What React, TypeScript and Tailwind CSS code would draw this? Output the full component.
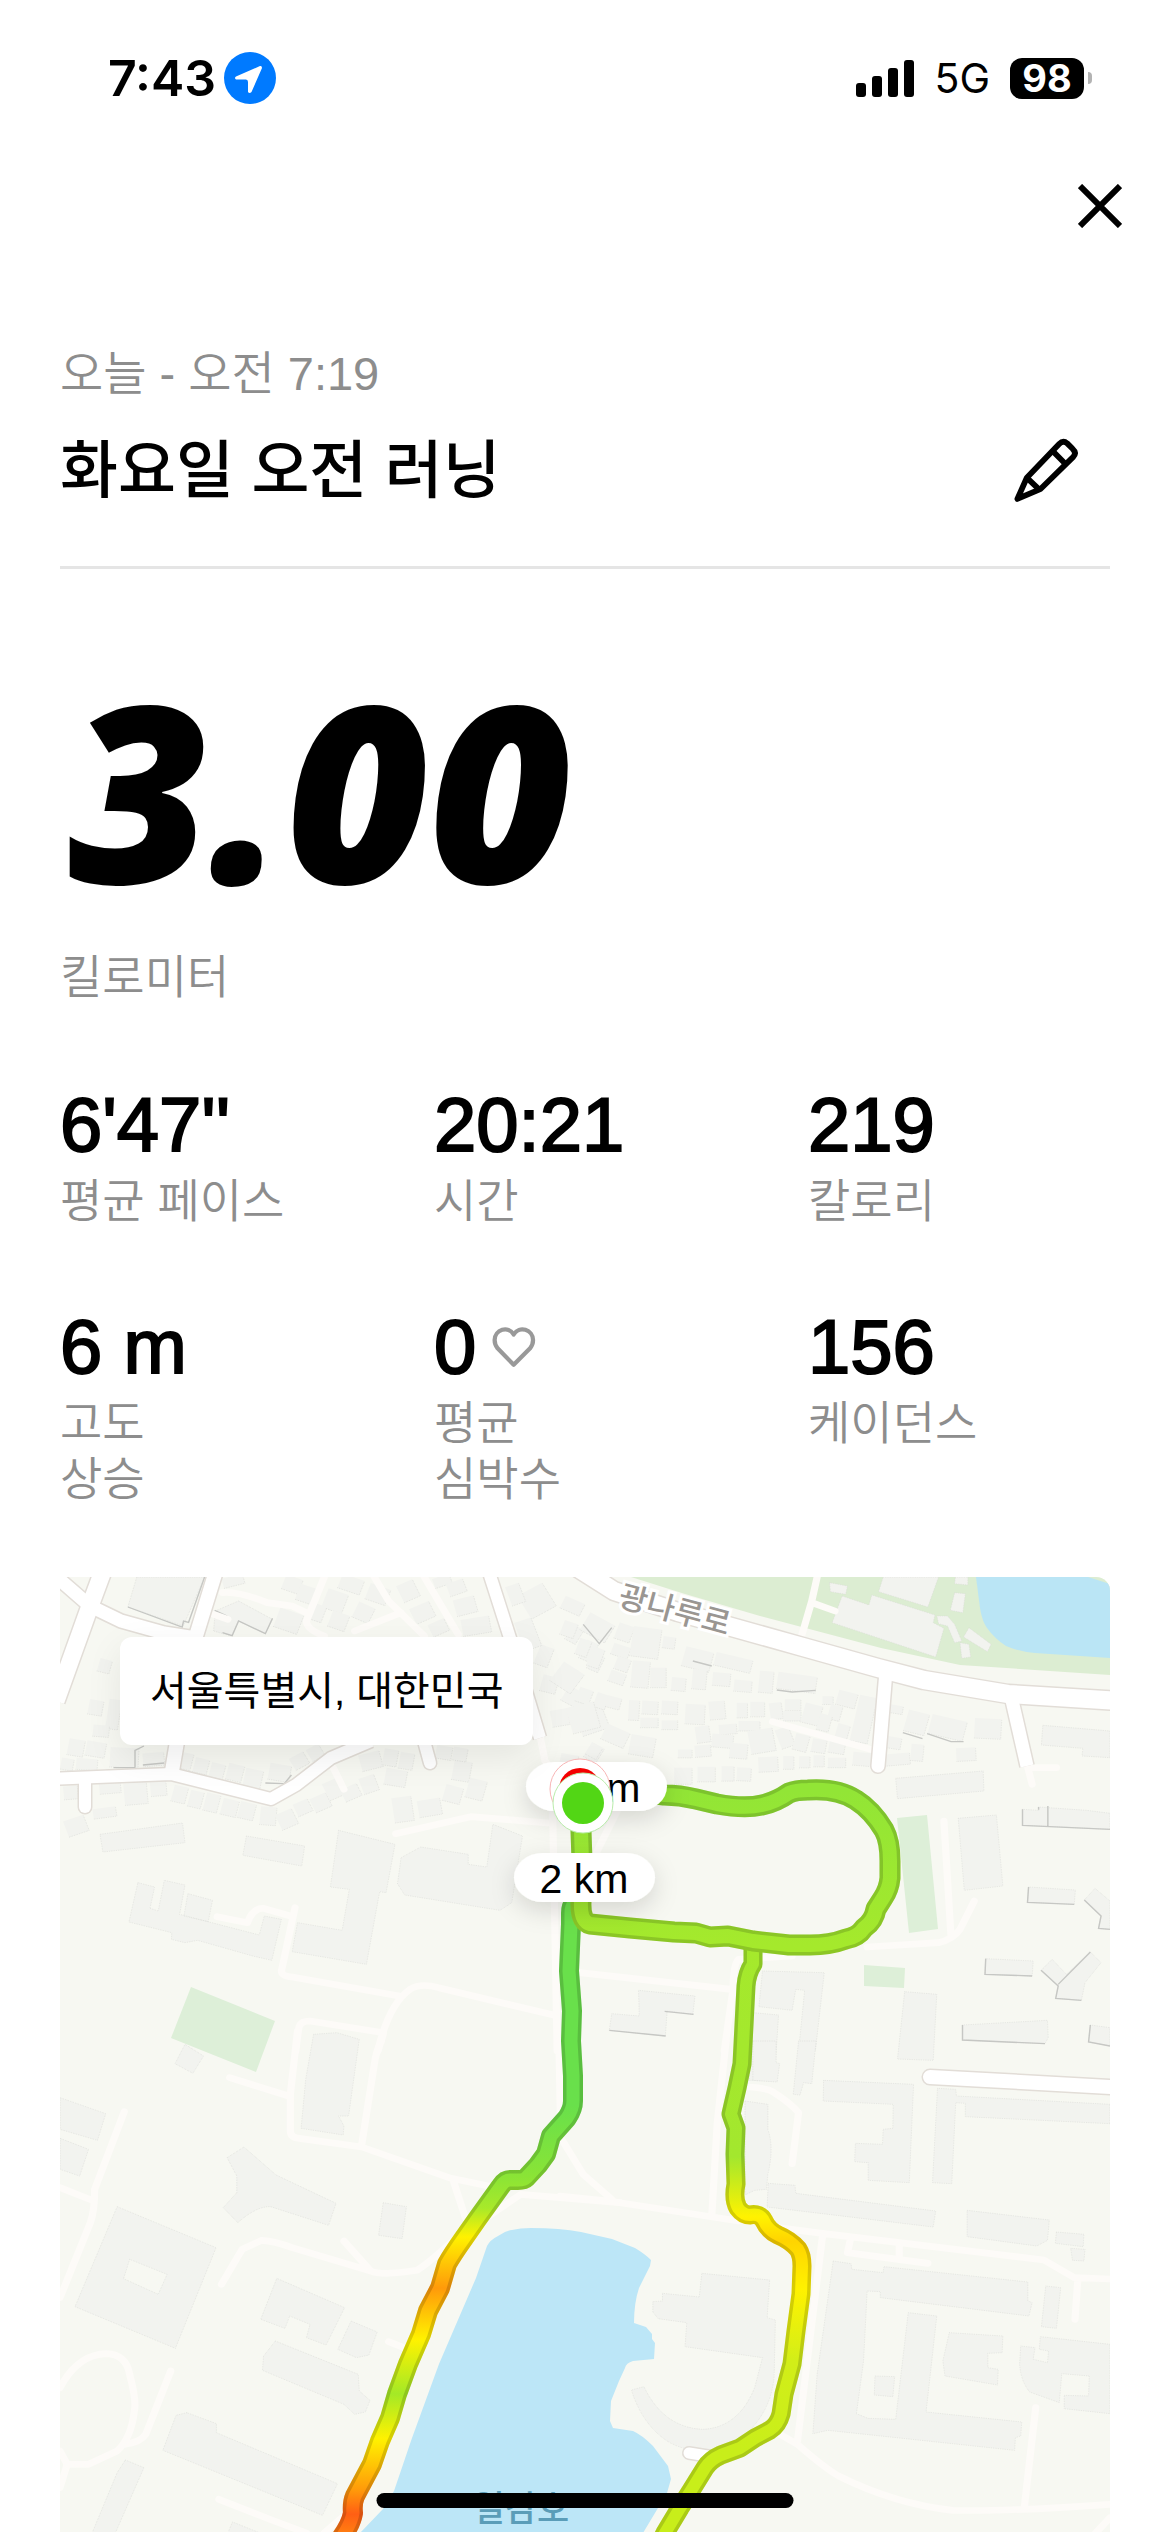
import React from "react";
import clsx from "clsx";

const latin = "font-['Liberation_Sans','Noto_Sans_CJK_KR',sans-serif]";

const stats = [
  { value: "6'47''", label: ["평균 페이스"] },
  { value: "20:21", label: ["시간"] },
  { value: "219", label: ["칼로리"] },
  { value: "6 m", label: ["고도", "상승"] },
  { value: "0", label: ["평균", "심박수"], heart: true },
  { value: "156", label: ["케이던스"] },
];

type House = [number, number, number, number, number];

type TileData = {
  transform: string;
  buildings: string;
  shades?: string;
  lanes: string;
  houses: House[];
};

// The ground layer is cut in four tiles, each with its own local units
const tiles: TileData[] = [
  {
    transform: "translate(60 1570) scale(0.35714 0.33333)",
    buildings:
      "M215 18H405L345 165 190 108Z M435 120 500 90 595 145 575 188 500 150 480 195 430 180Z M780 778 938 820 913 965 895 962 858 1180 650 1142 665 1055 790 1078 810 955 757 948Z M945 938 955 860 1010 828 1143 850V880L1195 888 1212 760 1295 795 1265 995 1232 1018 965 972Z M112 790 343 756 350 815 120 843Z M522 795 685 825 677 885 512 853Z M218 935 265 948 252 1012 275 1020 292 928 350 942 335 1030 558 1092 572 1035 620 1045 593 1168 540 1155 385 1108 350 1115 312 1105 313 1085 193 1053Z M358 968 427 988 415 1052 347 1035Z",
    shades:
      "M190 108 342 168 346 150 360 154 405 18 M433 118 468 135 M455 185 482 194 500 150 575 188 595 142 M210 590V538L235 525 M150 590H210 M232 582 292 576 M575 636 628 638 648 612",
    lanes:
      "M455 65Q500 60 580 95L650 105 690 125 M740 18 690 150Q690 175 740 195 M880 18 920 90 1020 195 M825 180 955 125 M1020 18 1115 190 M430 130 470 145 M940 788 1150 737 1380 757 M1380 750 1392 1440 M1345 500 1358 570 1380 600V750 M765 590 795 655 M440 1037 525 1055Q540 1010 570 1012L645 1035 M658 1010 620 1200Q620 1215 650 1218L950 1275 M890 1440Q920 1300 980 1255Q1010 1235 1060 1250L1385 1333 M905 1385 700 1350Q670 1350 668 1375L660 1440",
    houses: [
      [485, 30, 60, 30, -15], [650, 40, 50, 45, 20], [690, 70, 50, 50, 20], [815, 40, 65, 45, 20], [770, 90, 60, 60, 20],
      [720, 125, 40, 50, 20], [780, 150, 50, 50, 20], [640, 150, 70, 60, 20], [890, 70, 60, 50, 20], [850, 125, 50, 50, 25],
      [975, 60, 50, 55, -25], [1015, 125, 60, 50, -25], [1070, 30, 50, 30, -20], [1110, 50, 50, 40, -20], [1135, 105, 60, 50, -15],
      [1165, 165, 80, 50, -10], [1060, 170, 50, 40, -25], [1335, 90, 80, 80, -30], [1275, 70, 40, 60, -20], [1440, 190, 35, 50, 30],
      [1480, 240, 35, 60, 25], [1355, 255, 40, 60, 20], [1310, 190, 50, 90, -20], [1420, 310, 50, 50, 30], [1370, 340, 45, 50, 15],
      [1500, 275, 35, 50, 25], [1400, 440, 50, 50, -10], [1440, 380, 60, 50, 30], [1490, 450, 80, 70, -20], [1495, 545, 40, 50, 30],
      [1425, 570, 50, 40, 10], [125, 285, 35, 40, 15], [100, 410, 40, 45, 10], [150, 430, 35, 90, 8], [115, 480, 45, 35, 5],
      [45, 530, 45, 50, 10], [100, 535, 55, 45, 10], [20, 580, 35, 35, 10], [75, 580, 60, 35, 5], [180, 560, 80, 60, 3],
      [262, 565, 60, 40, -5], [335, 670, 40, 50, 14], [380, 685, 38, 50, 14], [425, 695, 40, 55, 14], [475, 710, 45, 50, 14],
      [523, 720, 45, 50, 14], [583, 735, 45, 55, 5], [635, 745, 50, 50, -25], [680, 710, 45, 40, -25], [730, 695, 50, 45, -25],
      [765, 655, 45, 55, -25], [815, 665, 50, 40, -25], [865, 640, 45, 50, -20], [940, 620, 60, 50, 10], [960, 715, 55, 75, -8],
      [1035, 710, 65, 50, -10], [1125, 600, 50, 60, 10], [1165, 655, 50, 60, 15], [1100, 670, 50, 50, 15], [350, 570, 40, 50, 14],
      [395, 585, 40, 45, 14], [440, 600, 40, 45, 14], [490, 605, 45, 50, 14], [540, 625, 50, 60, 12], [615, 605, 60, 50, 10],
      [670, 570, 45, 40, -30], [715, 545, 40, 40, -30], [870, 570, 60, 50, -15], [925, 560, 40, 50, 10], [970, 570, 40, 50, 10],
      [1075, 545, 45, 40, 10], [1120, 550, 40, 40, 10], [140, 650, 60, 35, -5], [212, 668, 65, 65, -5], [275, 645, 45, 60, -5],
      [30, 665, 40, 40, -5], [125, 725, 65, 30, -8], [45, 765, 60, 50, -20],
    ],
  },
  {
    transform: "translate(560 1570) scale(0.35714 0.33333)",
    buildings:
      "M905 18H1060L1030 108 892 62Z M790 75 865 102 873 72 1050 132 1045 155 1075 172 1052 258 762 155Z M1055 135 1085 135 1105 160 1125 210 1105 215 1085 165 1060 158Z M1145 170 1207 220 1197 242 1130 198Z M1120 215 1145 220 1150 258 1125 262Z M1105 65 1135 68 1128 125 1093 118Z M755 35 805 45 800 70 757 62Z M1107 18H1142V42L1105 38Z M1352 463 1540 480V560L1462 555 1464 532 1348 522Z M940 622 1185 600 1187 660 945 683Z M1115 742 1222 732 1240 945 1132 958Z M1295 715 1340 718V708L1475 718 1540 727V775L1295 763Z M1312 948 1443 957 1440 1000 1309 994Z M1468 987 1498 952 1540 990V1075L1508 1072 1515 1035Z M1192 1163 1325 1170 1322 1215 1190 1210Z M1347 1198 1378 1165 1418 1210 1485 1143 1515 1175 1470 1235 1460 1288 1388 1282 1395 1245Z M1127 1362 1365 1348 1367 1400 1358 1418 1127 1407Z M1485 1362 1540 1370V1425L1480 1413Z M965 1262 1055 1270 1045 1468 945 1464Z M567 1200 740 1205 715 1440 668 1440 685 1258 660 1255 650 1318 557 1307Z M540 1325 612 1332 600 1530 530 1528Z M220 1258 378 1275 372 1330 300 1320 295 1395 138 1378 145 1328 222 1335Z",
    shades:
      "M1295 715V763L1540 775 M1366 705V765 M1340 708V716 M1312 948 1309 994 1440 1000 M1468 987 1515 1035 1508 1072 1540 1075 M1192 1163 1190 1210 1322 1215 M1347 1198 1395 1245 1388 1282 1460 1288 M1395 1240 1485 1143 M1127 1362V1407L1358 1418 M1485 1362 1480 1413 1540 1425 M607 357 650 363 716 358 M293 1321 374 1330 M138 1378 296 1395 M960 485 1015 503 M1028 488 1095 512 1130 512 M65 160 110 218 145 170 M372 270 425 285",
    lanes:
      "M720 18 705 90 675 200 M705 95 770 120 M595 452 870 535 M1075 750 1095 1100 M860 1128 1060 1115Q1100 1105 1120 1075L1160 990 M1310 590H1390 M1310 590 1322 640 M55 1205 480 1255 M650 1155 500 1165Q485 1180 485 1250L460 1440 M160 720 90 870",
    houses: [
      [35, 105, 60, 40, 25], [105, 170, 80, 60, 30], [25, 175, 40, 45, 20], [65, 230, 35, 50, 20], [100, 260, 35, 60, 20],
      [180, 185, 45, 50, 20], [170, 240, 50, 35, 20], [240, 215, 80, 90, 8], [305, 215, 35, 35, 8], [175, 280, 40, 40, 20],
      [160, 320, 45, 35, 20], [385, 265, 80, 60, 15], [485, 275, 105, 40, 14], [225, 310, 50, 80, 5], [275, 320, 45, 60, 0],
      [332, 340, 40, 40, 5], [390, 325, 40, 60, 5], [452, 325, 50, 40, 5], [512, 345, 50, 35, 5], [577, 333, 40, 65, 5],
      [663, 335, 110, 50, 8], [68, 375, 40, 45, 20], [115, 390, 35, 45, 20], [150, 395, 40, 35, 15], [20, 320, 70, 70, 35],
      [65, 440, 80, 80, -15], [207, 418, 30, 60, 3], [252, 410, 45, 40, 3], [307, 410, 45, 40, 3], [250, 455, 50, 30, 0],
      [307, 462, 45, 28, 0], [378, 430, 55, 60, 3], [440, 418, 45, 55, -5], [510, 418, 30, 45, 0], [553, 415, 40, 45, 0],
      [605, 420, 35, 50, -8], [652, 402, 45, 35, 0], [650, 435, 50, 30, 0], [705, 430, 50, 60, 15], [750, 388, 30, 25, 0],
      [803, 385, 55, 45, 15], [770, 425, 35, 45, 15], [850, 445, 50, 140, 12], [740, 455, 35, 50, 15], [790, 485, 35, 50, 15],
      [155, 495, 70, 50, 25], [230, 525, 70, 60, 10], [400, 490, 40, 50, -8], [470, 475, 50, 30, -5], [455, 510, 60, 40, 5],
      [530, 465, 60, 30, 0], [565, 510, 70, 70, -10], [630, 500, 40, 60, -20], [675, 515, 40, 50, 15], [725, 525, 40, 40, 10],
      [775, 530, 45, 35, 10], [850, 565, 60, 40, 5], [400, 540, 45, 35, -5], [350, 548, 40, 25, 0], [500, 540, 50, 45, 5],
      [583, 580, 55, 45, -3], [640, 575, 30, 40, 0], [685, 573, 30, 35, 0], [725, 570, 30, 35, 0], [775, 575, 50, 30, 0],
      [345, 615, 50, 50, 0], [410, 610, 50, 45, 0], [470, 608, 35, 45, 0], [515, 610, 40, 40, 3], [945, 565, 70, 35, -5],
      [998, 455, 60, 65, 15], [1085, 470, 100, 60, 14], [1198, 473, 75, 60, 3], [940, 415, 40, 25, 10], [930, 515, 50, 35, 10],
      [1000, 545, 35, 50, 5], [1137, 550, 55, 40, -3], [95, 540, 35, 40, 30],
    ],
  },
  {
    transform: "translate(60 2040) scale(0.35714 0.33333)",
    buildings:
      "M0 170 128 218 105 298 0 265Z M0 292 80 325 55 405 0 385Z M160 497 437 620 323 922 42 797Z M195 655 300 700 275 760 178 713Z M468 350 515 318 605 402 773 487 752 553 590 497Q550 495 498 545L457 500 495 455V405Z M905 485 970 497 958 593 892 583Z M607 712 797 800 745 912 690 890 700 850 643 825 630 862 562 835Z M815 840 888 873 865 942 830 950 778 925Z M603 900 835 1000 838 1050 868 1078 855 1113 825 1120 795 1090 567 988 570 945Z M355 1115 438 1148V1175L777 1328 735 1423 288 1228 325 1123Z M183 1257 235 1280 155 1476H90L160 1295Z M483 1443 560 1476H470Z M350 10 402 45 372 97 322 68Z M710 -20 775 -25 838 -5 808 225 780 225 795 255 793 282 675 262 688 115Z",
    lanes:
      "M665 -30 645 160V270Q645 290 670 292L845 318 1095 412 1200 435 M475 110 640 165 M900 0Q885 30 880 70L845 310 M890 30 905 -20 M1100 415 1135 530 M1397 0 1402 290 1465 400 1545 475 M1180 540 1290 460 1568 485 M180 212 97 445Q97 510 85 545L0 770 M0 440 95 480 M452 730 510 625 565 598Q600 600 650 620L870 690Q900 705 1000 688Q1040 660 1110 590 M795 600 870 690 M920 902 975 925 M0 1040Q50 940 130 938Q185 940 195 1000Q215 1080 208 1110Q200 1190 160 1230L80 1270H20L0 1230 M20 1270 0 1340 M310 990 240 1180Q225 1205 180 1210 M445 1375 600 1440 690 1476 M740 1476 800 1420",
    houses: [],
  },
  {
    transform: "translate(560 2040) scale(0.35714 0.33333)",
    buildings:
      "M738 118 990 130 978 425 863 418V365L825 362 827 307 903 310 905 265 932 262 933 190 737 180Z M1057 142 1108 145 1110 165 1540 190V248L1135 227V187L1108 185 1097 428 1043 425Z M583 427 658 433 660 457 1052 510 1045 558 580 498Z M1140 508 1370 537 1365 598 1335 615 1140 587Z M1390 573 1467 580 1465 617 1387 607Z M1430 622 1470 625 1467 660 1435 658Z M765 660 815 668 817 685 905 695 907 677 1310 723V780L1322 785 1313 825 897 770V752L860 750 850 960 830 1118 862 1132 940 1135 975 815 1055 825 1025 1113 1293 1143 1290 1185 1275 1190 1273 1228 750 1168 708 1178 720 1000Z M882 1005 937 1007 932 1067 880 1062Z M1090 875 1240 885 1238 935 1198 937V980L1227 985 1225 1032 1078 1005 1072 960Z M1290 915 1330 920 1325 955 1365 965 1368 930 1342 925 1345 887 1540 910V1118L1412 1103V1063L1480 1065 1482 1005 1405 998 1398 1085 1315 1053Q1290 1020 1287 970Z M1360 735 1402 740 1390 862 1348 857Z M397 697 587 717 580 830 603 837 600 985Q600 1100 520 1180L450 1225Q360 1240 300 1200Q230 1150 200 1047L235 1037Q290 1160 400 1165Q500 1160 545 1040L567 950 350 917 355 845 275 833 260 813V782L287 780V757L390 768Z M518 180 582 190V265Q600 320 582 400L578 445 545 448 518 462Z M540 0H605V65L615 68 608 123 540 118Z M668 0H717L705 128 682 125 672 162 653 160Z",
    lanes:
      "M465 0 440 250 425 525 M0 465 150 482 500 540 M610 560 740 578 950 605 1355 657 1440 710 1540 714 M1450 715 1442 835 M735 585 665 1200 M812 600 805 635 1030 667 M950 605V650 M525 138Q580 140 600 155Q650 190 668 215L650 368 M600 1170 665 1210Q740 1280 780 1305Q940 1390 1100 1408Q1250 1412 1540 1390 M1332 1100 1300 1400 M1540 1430 1500 1476",
    houses: [],
  },
];

// Wider roads are drawn twice: casing first, then the white surface
const roads = [
  { d: "M103 1570 90 1605 56 1700", width: 17 },
  { d: "M52 1572 90 1605 121 1620 164 1632 196 1637", width: 13 },
  { d: "M216 1570 196 1635 184 1700 172 1770", width: 14 },
  { d: "M50 1778 171 1773 271 1798 296 1784 331 1757 371 1740", width: 12 },
  { d: "M85 1780V1806", width: 12, round: true },
  { d: "M424 1740 430 1762", width: 12, round: true },
  { d: "M486 1562 510 1637 540 1737", width: 12 },
  { d: "M886 1670 881 1730 878 1765", width: 13, round: true },
  { d: "M1011 1695 1027 1765", width: 13 },
  { d: "M570 1562 614 1590 678 1611 803 1646 878 1667 924 1679 1008 1693 1120 1700", width: 18 },
  { d: "M930 2076 1130 2087", width: 14, round: true },
  { d: "M689 2452 714 2456", width: 11, round: true },
];

const loopPath =
  "M583 1802 600 1790 640 1791 664 1794Q680 1794 696 1798L717 1803Q745 1808 762 1804Q776 1801 789 1792Q796 1789 808 1789Q838 1787 856 1799Q872 1809 884 1829Q890 1840 890 1860V1877Q889 1888 883 1897L876 1908Q874 1920 864 1927Q858 1936 846 1938Q830 1944 810 1944H789L753 1940 728 1935 710 1936 696 1932 674 1931 630 1927 590 1923Q580 1920 581 1900L582 1860 581 1830 583 1802";
const westPath =
  "M581 1900Q571 1900 571 1912V1923L569 1970 572 2010 571 2040 573 2075V2100Q573 2108 567 2117L551 2135 546 2153 538 2164 526 2177Q524 2179 518 2179H510Q505 2179 501 2185L478 2217 464 2237Q452 2254 447 2263L440 2287 428 2310 421 2333 408 2363 397 2393 390 2417 380 2440 372 2463 355 2495Q352 2502 353 2512Q351 2524 339 2540";
const eastPath =
  "M753 1942V1963Q747 1972 746 1985L742 2063 737 2087 731 2113 736 2127 735 2153 736 2183Q733 2198 738 2207Q743 2214 750 2214Q760 2212 764 2220Q768 2229 778 2234Q790 2239 798 2248Q802 2254 802 2265L801 2293 796 2330 792 2363 784 2393 781 2413Q778 2424 770 2429L755 2437 740 2447 721 2454Q710 2459 705 2467L692 2488 680 2507 665 2532 660 2542";

const Route = ({ d, stroke, width }: { d: string; stroke: string; width: number }) => (
  <g fill="none" strokeLinecap="round" strokeLinejoin="round">
    <path d={d} stroke={stroke} strokeWidth={width} />
    <path d={d} stroke="#000" strokeOpacity="0.15" strokeWidth={width} />
    <path d={d} stroke={stroke} strokeWidth={width - 7} />
  </g>
);

const Tile = ({ tile }: { tile: TileData }) => (
  <g transform={tile.transform}>
    <g fill="#f2f3ef" stroke="#d8d9d5" strokeWidth="1" strokeDasharray="2 3">
      {tile.houses.map(([x, y, w, h, angle], i) => (
        <g key={i} transform={`translate(${x} ${y}) rotate(${angle})`}>
          <rect x={-w / 2} y={-h / 2} width={w} height={h} stroke="none" />
          <path d={`M${-w / 2} ${h / 2}H${w / 2}V${-h / 2}`} fill="none" strokeWidth="2" />
        </g>
      ))}
      <path d={tile.buildings} fillRule="evenodd" strokeWidth="2" />
    </g>
    {tile.shades && <path d={tile.shades} fill="none" stroke="#c6c7c4" strokeWidth="4" />}
    <path
      d={tile.lanes}
      fill="none"
      stroke="#fdfbf8"
      strokeWidth="20"
      strokeLinecap="round"
      strokeLinejoin="round"
    />
  </g>
);

const Pill = ({ x, y, text }: { x: number; y: number; text: string }) => (
  <g>
    <rect x={x} y={y} width="141" height="49" rx="29" ry="25" fill="#fff" filter="url(#pillShadow)" />
    <text x={x + 70} y={y + 40} textAnchor="middle" className="font-['Liberation_Sans',sans-serif] text-[41px]">
      {text}
    </text>
  </g>
);

const RouteMap = () => (
  <svg
    className="absolute inset-0 h-full w-full"
    viewBox="60 1576 1050 956"
    preserveAspectRatio="xMidYMin slice"
    role="img"
    aria-label="러닝 경로"
  >
    <defs>
      <linearGradient id="west" gradientUnits="userSpaceOnUse" x1="0" y1="1900" x2="0" y2="2540">
        <stop offset="0" stopColor="#69e04b" />
        <stop offset="0.32" stopColor="#69e04b" />
        <stop offset="0.43" stopColor="#8ae436" />
        <stop offset="0.48" stopColor="#a8e92a" />
        <stop offset="0.525" stopColor="#fff200" />
        <stop offset="0.605" stopColor="#ff9a0a" />
        <stop offset="0.685" stopColor="#fff200" />
        <stop offset="0.77" stopColor="#a4e926" />
        <stop offset="0.84" stopColor="#fff200" />
        <stop offset="0.92" stopColor="#ff9a0a" />
        <stop offset="0.958" stopColor="#ff5f14" />
        <stop offset="1" stopColor="#ff8a10" />
      </linearGradient>
      <linearGradient id="east" gradientUnits="userSpaceOnUse" x1="0" y1="1940" x2="0" y2="2540">
        <stop offset="0" stopColor="#a5e92c" />
        <stop offset="0.36" stopColor="#a3e72e" />
        <stop offset="0.46" stopColor="#fff200" />
        <stop offset="0.5" stopColor="#ffd400" />
        <stop offset="0.58" stopColor="#fff200" />
        <stop offset="0.7" stopColor="#d2ee18" />
        <stop offset="0.85" stopColor="#c8ee1a" />
        <stop offset="1" stopColor="#c8ee1a" />
      </linearGradient>
      <linearGradient id="loop" gradientUnits="userSpaceOnUse" x1="0" y1="1790" x2="0" y2="1945">
        <stop offset="0" stopColor="#92e536" />
        <stop offset="1" stopColor="#a5e92c" />
      </linearGradient>
      <filter id="pillShadow" x="-30%" y="-50%" width="160%" height="250%">
        <feDropShadow dx="0" dy="8" stdDeviation="12" floodColor="#000" floodOpacity="0.14" />
      </filter>
    </defs>

    <rect x="-1000" y="1576" width="4000" height="2000" fill="#f7f8f2" />

    {/* Parks */}
    <path d="M631 1576H1110V1674L960 1664 881 1647 760 1615 685 1593Z" fill="#dcedd2" />
    <path d="M897 1817 927 1814 938 1928 909 1932ZM864 1964 905 1967 904 1987 864 1985Z" fill="#ddefd8" />
    <path d="M191 1986 275 2020 256 2071 171 2037Z" fill="#ddefd8" />

    {tiles.map((tile) => (
      <Tile key={tile.transform} tile={tile} />
    ))}

    {/* Water */}
    <path
      d="M976 1576 980 1607Q982 1620 987 1627 995 1638 1006 1645 1020 1651 1035 1652L1110 1657V1583L1088 1576Z"
      fill="#bae5f5"
    />
    <path
      d="M360 2532 383 2508 394 2490 412 2437 439 2363 476 2277 487 2245Q490 2239 498 2235 505 2230 512 2229 520 2227 531 2227 560 2227 581 2231L612 2238 635 2247Q645 2253 651 2259L650 2265 639 2287Q634 2302 634 2322L646 2326 652 2333V2338L655 2342 654 2358 633 2360Q626 2362 625 2367L619 2380 611 2400 610 2420 613 2427 633 2430Q642 2434 653 2445L668 2465 671 2478 667 2492 643 2532Z"
      fill="#bce6f7"
    />

    {/* Roads */}
    <g fill="none" strokeLinejoin="round">
      {roads.map((road) => (
        <path
          key={road.d}
          d={road.d}
          stroke="#e2ddd7"
          strokeWidth={road.width + 3}
          strokeLinecap={road.round ? "round" : "butt"}
        />
      ))}
      {roads.map((road) => (
        <path
          key={road.d}
          d={road.d}
          stroke="#fff"
          strokeWidth={road.width}
          strokeLinecap={road.round ? "round" : "butt"}
        />
      ))}
    </g>

    <g className="font-['Noto_Sans_CJK_KR',sans-serif]">
      <text
        x="675"
        y="1620"
        transform="rotate(15 675 1608)"
        textAnchor="middle"
        fill="#9a9692"
        stroke="#fff"
        strokeWidth="6"
        paintOrder="stroke"
        className="text-[31px] font-medium"
      >
        광나루로
      </text>
      <text x="521" y="2520" textAnchor="middle" fill="#5b9db8" className="text-[35px] font-medium">
        일감호
      </text>
    </g>

    <Route d={westPath} stroke="url(#west)" width={20} />
    <Route d={eastPath} stroke="url(#east)" width={19} />
    <Route d={loopPath} stroke="url(#loop)" width={21} />

    {/* Distance markers, then the finish and start pins */}
    <Pill x={526} y={1761} text="3 km" />
    <Pill x={514} y={1852} text="2 km" />
    <circle cx="580" cy="1788" r="30" fill="#fff" stroke="#f7b5b5" strokeWidth="1" />
    <circle cx="580" cy="1788" r="21" fill="#f40000" />
    <circle cx="583" cy="1802" r="30" fill="#fff" stroke="#b9ecaa" strokeWidth="1" />
    <circle cx="583" cy="1802" r="21" fill="#52d615" />
  </svg>
);

const StatusBar = () => (
  <div className="flex h-13 items-center justify-between pl-27 pr-[78px] font-['Inter',sans-serif]">
    <div className="flex items-center gap-2">
      <span className="text-[50px] leading-13 font-semibold">7:43</span>
      <svg className="size-13" viewBox="0 0 52 52" aria-hidden="true">
        <circle cx="26" cy="26" r="26" fill="#007aff" />
        <path
          d="M36 14 12 24.500Q10 26 12 27.500H22Q24 27.500 24 30V40Q25.500 42 27.500 40L38 16Q38 13.500 36 14Z"
          fill="#fff"
        />
      </svg>
    </div>
    <div className="flex items-center">
      <svg className="mr-5 h-10 w-[58px]" viewBox="0 0 58 40" aria-hidden="true">
        <rect x="0" y="25" width="10" height="14" rx="3" />
        <rect x="16" y="18" width="10" height="21" rx="3" />
        <rect x="32" y="10" width="10" height="29" rx="3" />
        <rect x="48" y="2" width="10" height="37" rx="3" />
      </svg>
      <span className="mr-5 text-[41px] leading-13">5G</span>
      <span className="flex h-[41px] w-[74px] items-center justify-center rounded-xl bg-black text-[38px] leading-10 font-bold text-white">
        98
      </span>
      <span className="ml-1 h-3 w-1 rounded-r-full bg-[#b3b3b3]" />
    </div>
  </div>
);

const App = () => {
  return (
    <main
      className={clsx(
        "relative flex min-h-screen flex-col overflow-hidden bg-white pt-[52px] text-black",
        latin
      )}
    >
      <StatusBar />

      <div className="mt-20 flex justify-end pr-12">
        <button type="button" aria-label="닫기">
          <svg className="size-11" viewBox="0 0 44 44" fill="none" stroke="currentColor" strokeWidth="6">
            <path d="M2 2 42 42M42 2 2 42" />
          </svg>
        </button>
      </div>

      <div className="flex flex-1 flex-col px-15">
        {/* Heading */}
        <header className="mt-[118px] border-b-3 border-[#e5e5e5] pb-14">
          <p className="text-[47px] leading-14 font-[350] text-[#8d8d8d]">오늘 - 오전 7:19</p>
          <div className="mt-7 flex items-center justify-between pr-8">
            <h1 className="text-[63px] leading-20 font-medium">화요일 오전 러닝</h1>
            <button type="button" aria-label="이름 수정">
              <svg
                className="size-16"
                viewBox="100 78 190 190"
                fill="none"
                stroke="currentColor"
                strokeWidth="17"
                strokeLinejoin="round"
              >
                <path d="M110 259 138 196 234 96Q246 84 258 94L274 110Q287 122 276 134L178 230Z" />
                <path d="M214 116 250 152M140 198 176 232" />
              </svg>
            </button>
          </div>
        </header>

        {/* Distance */}
        <p className="mt-[60px] pl-2 font-['Open_Sans',sans-serif] text-[246px] leading-[320px] font-extrabold italic">
          3.00
        </p>
        <p className="text-[46px] leading-14 font-[350] text-[#8d8d8d]">킬로미터</p>

        <dl className="mt-20 grid grid-cols-3 gap-x-18 gap-y-[78px]">
          {stats.map((stat) => (
            <div key={stat.value} className="flex flex-col gap-2">
              <dd className="order-first flex items-center gap-4 text-[76px] leading-20 [-webkit-text-stroke:2px]">
                {stat.value}
                {stat.heart && (
                  <svg
                    className="h-[42px] w-11"
                    viewBox="220 96 134 126"
                    fill="none"
                    stroke="#999"
                    strokeWidth="13"
                    strokeLinejoin="round"
                    aria-hidden="true"
                  >
                    <path d="M286 213 237 163Q228 152 228 138C228 106 270 92 286 121 303 92 345 106 345 138Q345 152 336 163Z" />
                  </svg>
                )}
              </dd>
              <dt className="text-[46px] leading-14 font-[350] text-[#8d8d8d]">
                {stat.label.map((line) => (
                  <span key={line} className="block">
                    {line}
                  </span>
                ))}
              </dt>
            </div>
          ))}
        </dl>

        {/* Map */}
        <section className="relative mt-[70px] min-h-[600px] flex-1 overflow-hidden rounded-tr-[14px]">
          <RouteMap />
          <p className="absolute top-15 left-15 rounded-xl bg-white px-[30px] py-6 text-[40px] leading-15 shadow-[0_12px_36px_rgba(0,0,0,0.08)]">
            서울특별시, 대한민국
          </p>
        </section>
      </div>

      <div className="absolute bottom-6 left-1/2 h-[15px] w-[417px] -translate-x-1/2 rounded-full bg-black" />
    </main>
  );
};

export default App;
